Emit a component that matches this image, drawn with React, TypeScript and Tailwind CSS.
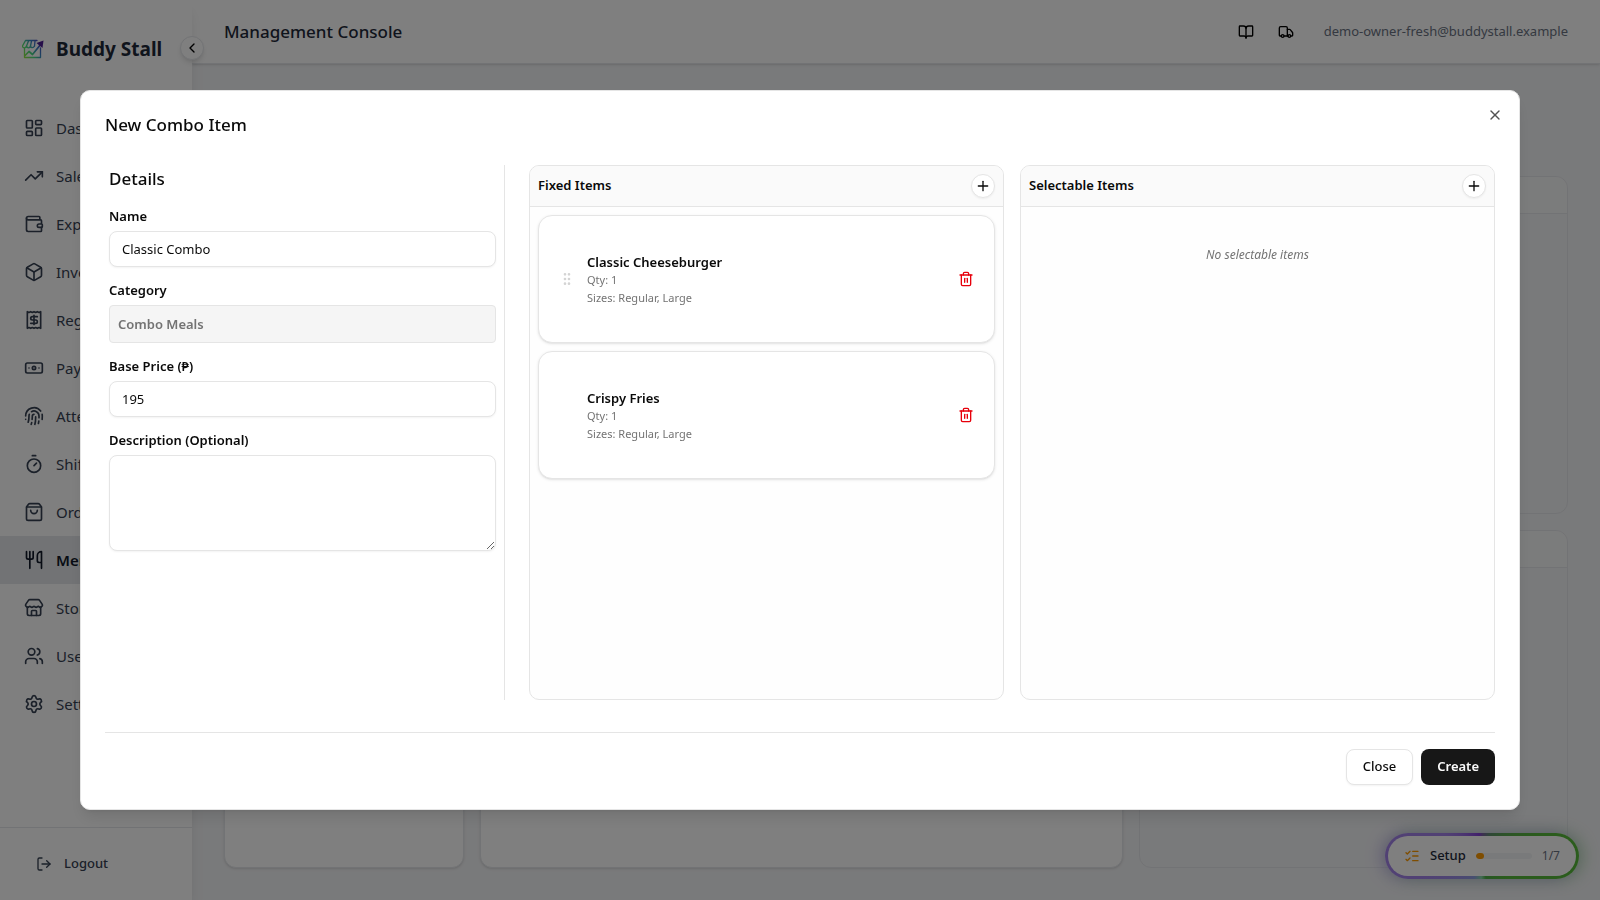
import React, { useState } from "react";
import type { LucideIcon } from "lucide-react";
import {
  Banknote,
  BookOpen,
  Box,
  ChevronLeft,
  FingerprintPattern,
  GripVertical,
  LayoutDashboard,
  ListChecks,
  LogOut,
  Plus,
  Receipt,
  Settings,
  ShoppingBag,
  Store,
  Timer,
  Trash2,
  TrendingUp,
  Truck,
  Users,
  Utensils,
  Wallet,
  X,
} from "lucide-react";

interface NavItem {
  label: string;
  icon: LucideIcon;
  active?: boolean;
}

interface ComboItem {
  name: string;
  qty: number;
  sizes: string[];
  draggable?: boolean;
}

const navItems: NavItem[] = [
  { label: "Dashboard", icon: LayoutDashboard },
  { label: "Sales", icon: TrendingUp },
  { label: "Expenses", icon: Wallet },
  { label: "Inventory", icon: Box },
  { label: "Register", icon: Receipt },
  { label: "Payroll", icon: Banknote },
  { label: "Attendance", icon: FingerprintPattern },
  { label: "Shifts", icon: Timer },
  { label: "Orders", icon: ShoppingBag },
  { label: "Menu", icon: Utensils, active: true },
  { label: "Store", icon: Store },
  { label: "Users", icon: Users },
  { label: "Settings", icon: Settings },
];

const initialItems: ComboItem[] = [
  { name: "Classic Cheeseburger", qty: 1, sizes: ["Regular", "Large"], draggable: true },
  { name: "Crispy Fries", qty: 1, sizes: ["Regular", "Large"] },
];

const Logo = () => (
  <svg viewBox="0 0 44 40" className="h-5 w-[22px]" fill="none" aria-hidden="true">
    <defs>
      <linearGradient id="logo" x1="0" y1="36" x2="44" y2="6" gradientUnits="userSpaceOnUse">
        <stop offset="0" stopColor="#a3e635" />
        <stop offset="0.35" stopColor="#4ade80" />
        <stop offset="0.62" stopColor="#3b82c6" />
        <stop offset="1" stopColor="#5b21b6" />
      </linearGradient>
    </defs>
    <g stroke="url(#logo)" strokeWidth="2.6" strokeLinejoin="round" strokeLinecap="round">
      <path d="M30 3H7L1 14c0 5 7 5 8 0 1 5 7 5 8 0 1 5 6 4 8 0" />
      <path d="M13 4L9 14M19 4l-2 10M26 4l-1 10" />
      <path d="M5 19v18h32V18" />
      <path d="M6 33l8-8 7 6L38 10" strokeWidth="3.4" />
    </g>
    <path d="M29 8L43 3l-2 15z" fill="#4c1d95" />
  </svg>
);

const Sidebar = () => (
  <aside className="relative z-10 flex w-48 shrink-0 flex-col bg-white shadow-lg">
    <div className="flex h-[98px] items-center gap-3 pl-[22px]">
      <Logo />
      <span className="text-[19px] font-bold text-gray-800">Buddy Stall</span>
    </div>
    <button
      type="button"
      aria-label="Collapse sidebar"
      className="absolute top-9 -right-3 flex size-6 items-center justify-center rounded-full border border-gray-200 bg-white shadow-md"
    >
      <ChevronLeft className="size-4" />
    </button>
    <nav className="flex-1 pt-[6px]">
      {navItems.map(({ label, icon: Icon, active }) => (
        <a
          key={label}
          href="#"
          className={
            active
              ? "flex h-12 items-center gap-3 bg-gray-200 px-6 text-[15px] font-semibold text-gray-900"
              : "flex h-12 items-center gap-3 px-6 text-[15px] text-gray-700"
          }
        >
          <Icon className="size-5" />
          {label}
        </a>
      ))}
    </nav>
    <div className="border-t border-gray-200 p-4">
      <button
        type="button"
        className="flex h-10 w-full items-center gap-3 px-5 text-[13px] font-medium text-gray-700"
      >
        <LogOut className="size-4" />
        Logout
      </button>
    </div>
  </aside>
);

const Header = () => (
  <header className="flex h-16 shrink-0 items-center justify-between border-b border-gray-200 bg-white px-8 shadow-sm">
    <h1 className="text-[17px] font-medium text-gray-800">Management Console</h1>
    <div className="flex items-center gap-2">
      <button type="button" aria-label="Guide" className="flex size-8 items-center justify-center">
        <BookOpen className="size-4" />
      </button>
      <button type="button" aria-label="Deliveries" className="flex size-8 items-center justify-center">
        <Truck className="size-4" />
      </button>
      <span className="pl-[14px] text-[13px] text-gray-500">demo-owner-fresh@buddystall.example</span>
    </div>
  </header>
);

const SidePanel = () => (
  <section className="flex flex-1 flex-col overflow-hidden rounded-xl border border-gray-200">
    <div className="h-[37px] border-b border-gray-200 bg-neutral-50/60" />
  </section>
);

const SetupWidget = () => (
  <div className="absolute right-[21px] bottom-[21px] rounded-full bg-[conic-gradient(from_0deg,#7c5aa8_0deg,#5f8f6f_20deg,#56b83a_70deg,#56b83a_130deg,#4fae48_170deg,#86d8a8_182deg,#8f9fe0_200deg,#a283e8_250deg,#a283e8_300deg,#8440d8_352deg,#7c5aa8_360deg)] p-[3px] shadow-[-4px_0_16px_rgba(139,92,246,0.35),4px_0_16px_rgba(74,190,50,0.35)]">
    <button type="button" className="flex h-10 items-center rounded-full bg-white px-4 text-[13px]">
      <ListChecks className="size-4 text-amber-500" />
      <span className="pl-[10px] font-medium text-gray-800">Setup</span>
      <span className="ml-[10px] h-[6px] w-14 overflow-hidden rounded-full bg-gray-100">
        <span className="block h-full w-1/7 rounded-full bg-amber-500" />
      </span>
      <span className="pl-[10px] text-xs text-gray-500">1/7</span>
    </button>
  </div>
);

interface ItemPanelProps {
  title: string;
  children: React.ReactNode;
}

const ItemPanel: React.FC<ItemPanelProps> = ({ title, children }) => (
  <section className="flex min-w-0 flex-1 flex-col overflow-hidden rounded-[10px] border border-neutral-200 bg-[#fefefe]">
    <div className="flex items-center justify-between border-b border-neutral-200 bg-neutral-50 p-2">
      <h3 className="text-[13px] font-semibold">{title}</h3>
      <button
        type="button"
        aria-label={`Add to ${title}`}
        className="flex size-6 items-center justify-center rounded-full border border-neutral-200 bg-white shadow-xs"
      >
        <Plus className="size-4" />
      </button>
    </div>
    <div className="flex flex-1 flex-col gap-2 p-2">{children}</div>
  </section>
);

interface ItemCardProps {
  item: ComboItem;
  onRemove: () => void;
}

const ItemCard: React.FC<ItemCardProps> = ({ item, onRemove }) => (
  <div className="flex h-32 items-center rounded-[14px] border border-neutral-200 bg-white px-5 shadow-sm">
    <div className="w-7">
      {item.draggable && <GripVertical className="size-4 text-neutral-300" />}
    </div>
    <div className="flex-1 pt-[2px] text-[11px] leading-[18px] text-neutral-500">
      <p className="text-[13px] leading-[18px] font-semibold text-neutral-950">{item.name}</p>
      <p>Qty: {item.qty}</p>
      <p>Sizes: {item.sizes.join(", ")}</p>
    </div>
    <button type="button" aria-label={`Remove ${item.name}`} onClick={onRemove} className="text-red-600">
      <Trash2 className="size-4" />
    </button>
  </div>
);

const labelClass = "text-[13px] leading-[14px] font-semibold";
const inputClass =
  "h-9 w-full rounded-lg border border-neutral-200 bg-white px-3 text-[13px] shadow-xs outline-none";

const ComboDialog = () => {
  const [name, setName] = useState("Classic Combo");
  const [price, setPrice] = useState("195");
  const [description, setDescription] = useState("");
  const [items, setItems] = useState<ComboItem[]>(initialItems);

  return (
    <div className="fixed inset-0 z-50 flex items-center justify-center bg-black/50">
      <div
        role="dialog"
        aria-labelledby="combo-title"
        className="relative flex h-[80vh] w-[90vw] flex-col rounded-[10px] border border-neutral-200 bg-white p-6 text-neutral-950 shadow-lg"
      >
        <h2 id="combo-title" className="pt-[2px] text-[17px] leading-4 font-medium">
          New Combo Item
        </h2>
        <button type="button" aria-label="Dismiss" className="absolute top-4 right-4 text-neutral-600">
          <X className="size-4" />
        </button>

        <div className="flex min-h-0 flex-1 gap-6 pt-8">
          <form className="flex w-[400px] shrink-0 flex-col gap-4 border-r border-neutral-200 pr-2 pl-1">
            <h3 className="text-[17px] leading-7 font-medium">Details</h3>
            <div className="flex flex-col gap-2">
              <label htmlFor="name" className={labelClass}>Name</label>
              <input id="name" className={inputClass} value={name} onChange={(e) => setName(e.target.value)} />
            </div>
            <div className="flex flex-col gap-2">
              <label htmlFor="category" className={labelClass}>Category</label>
              <input
                id="category"
                readOnly
                value="Combo Meals"
                className="h-[38px] w-full rounded border border-neutral-200 bg-neutral-100 px-2 text-[13px] font-semibold text-neutral-500 outline-none"
              />
            </div>
            <div className="flex flex-col gap-2">
              <label htmlFor="price" className={labelClass}>Base Price (₱)</label>
              <input id="price" className={inputClass} value={price} onChange={(e) => setPrice(e.target.value)} />
            </div>
            <div className="flex flex-col gap-2">
              <label htmlFor="description" className={labelClass}>Description (Optional)</label>
              <textarea
                id="description"
                value={description}
                onChange={(e) => setDescription(e.target.value)}
                className="h-24 w-full rounded-lg border border-neutral-200 bg-white px-3 py-2 text-[13px] shadow-xs outline-none"
              />
            </div>
          </form>

          <div className="flex min-w-0 flex-1 gap-4">
            <ItemPanel title="Fixed Items">
              {items.map((item) => (
                <ItemCard
                  key={item.name}
                  item={item}
                  onRemove={() => setItems((prev) => prev.filter((i) => i.name !== item.name))}
                />
              ))}
            </ItemPanel>
            <ItemPanel title="Selectable Items">
              <p className="py-8 text-center text-xs text-neutral-500 italic">No selectable items</p>
            </ItemPanel>
          </div>
        </div>

        <div className="mt-8 flex justify-end gap-2 border-t border-neutral-200 pt-4">
          <button
            type="button"
            className="h-9 rounded-lg border border-neutral-200 bg-white px-4 text-[13px] font-medium shadow-xs"
          >
            Close
          </button>
          <button type="button" className="h-9 rounded-lg bg-neutral-900 px-4 text-[13px] font-semibold text-neutral-50">
            Create
          </button>
        </div>
      </div>
    </div>
  );
};

export default function App() {
  return (
    <div className="relative flex h-screen overflow-hidden bg-gray-100 font-['Noto_Sans','Open_Sans',sans-serif]">
      <Sidebar />
      <div className="flex min-w-0 flex-1 flex-col">
        <Header />
        <main className="grid min-h-0 flex-1 grid-cols-[240px_3fr_2fr] gap-4 px-8 pt-28 pb-8">
          <section className="rounded-xl border border-gray-200 bg-white shadow-sm" />
          <section className="rounded-xl border border-gray-200 bg-white shadow-sm" />
          <div className="flex flex-col gap-4">
            <SidePanel />
            <SidePanel />
          </div>
        </main>
      </div>
      <SetupWidget />
      <ComboDialog />
    </div>
  );
}
